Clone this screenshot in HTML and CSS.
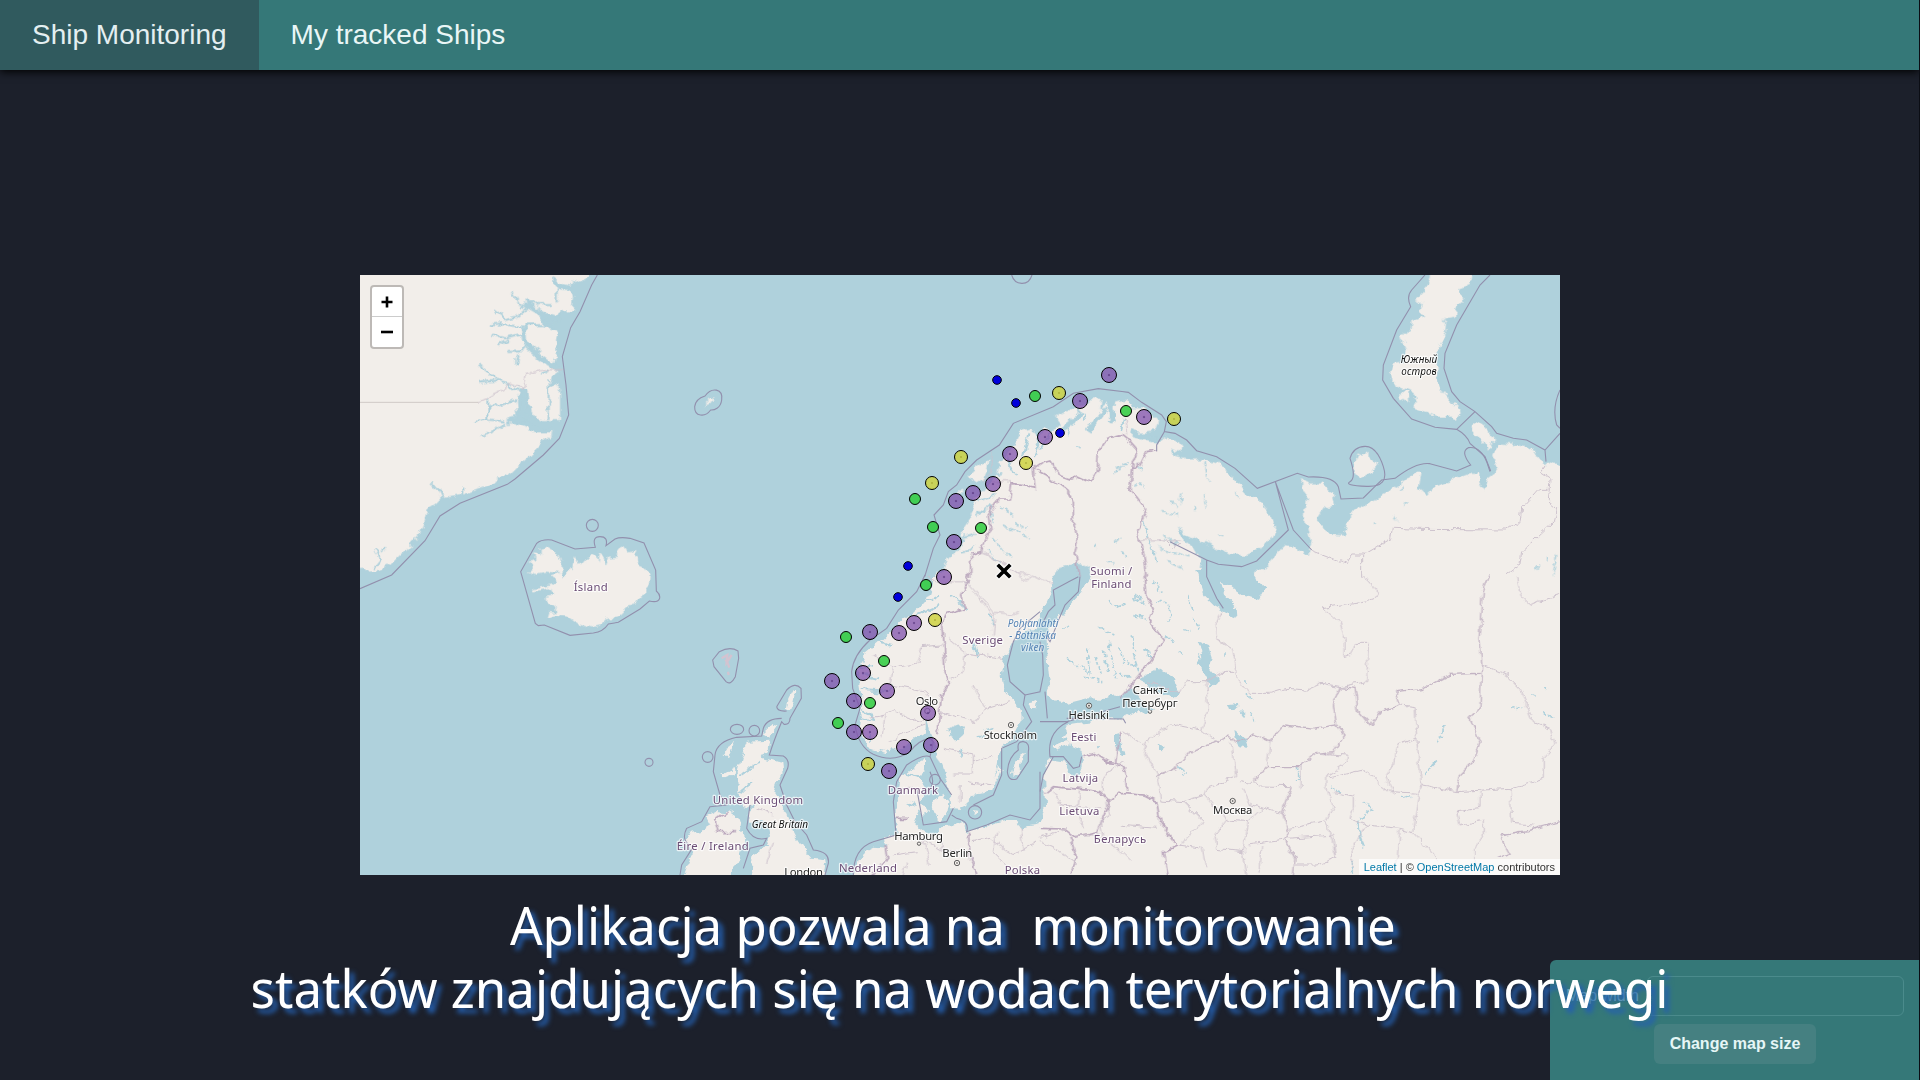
FILE: index.html
```html
<!DOCTYPE html>
<html lang="en">
<head>
<meta charset="utf-8">
<title>Ship Monitoring</title>
<link rel="stylesheet" href="styles.css">
</head>
<body>
<div class="app">
<nav class="navbar">
  <a class="nav-link active">Ship Monitoring</a>
  <a class="nav-link">My tracked Ships</a>
</nav>
<main class="stage">
<div class="map">
<svg class="map-canvas" viewBox="0 0 3600 1800" width="1200" height="600">
<defs>
  <filter id="coast" filterUnits="userSpaceOnUse" x="-60" y="-60" width="3720" height="1920" color-interpolation-filters="sRGB">
    <feTurbulence type="fractalNoise" baseFrequency="0.03" numOctaves="4" seed="7" result="n"/>
    <feDisplacementMap in="SourceGraphic" in2="n" scale="30" xChannelSelector="R" yChannelSelector="G"/>
  </filter>
  <filter id="rough" filterUnits="userSpaceOnUse" x="-60" y="-60" width="3720" height="1920" color-interpolation-filters="sRGB">
    <feTurbulence type="fractalNoise" baseFrequency="0.035" numOctaves="3" seed="3" result="n"/>
    <feDisplacementMap in="SourceGraphic" in2="n" scale="22" xChannelSelector="R" yChannelSelector="G"/>
  </filter>
  <g id="cargo"><circle r="22.5"/><circle class="pin" r="2.5"/></g>
  <g id="tanker"><circle r="19.5"/><circle class="pin" r="2"/></g>
  <circle id="fishing" r="16.5"/>
  <circle id="pilot" r="13"/>
</defs>

<g filter="url(#coast)">
<!-- land: Greenland, Iceland, Jan Mayen -->
<g class="land">
  <path d="M-50-50H700L675 8 645 22 630 32 600 24 575 5 580 28 595 42 620 45 642 60 638 105 610 108 580 130 545 115 520 98 512 68 502 72 508 100 545 130 552 150 590 165 585 195 590 225 580 262 540 245 500 210 492 216 530 250 575 285 600 290 575 305 566 345 590 325 600 345 600 438 540 438 512 405 505 350 475 345 468 380 472 425 440 435 480 450 530 472 582 472 550 500 520 530 490 560 460 590 420 610 380 630 340 645 300 660 245 670 225 690 200 705 190 740 180 775 160 800 130 830 110 850 90 870 60 885-50 890z"/>
  <path d="M500 890L520 870 505 860 530 855 520 835 545 840 545 815 560 812 590 830 605 855 605 890 612 905 630 880 640 885 645 840 660 870 685 840 700 840 712 865 718 838 735 850 740 875 750 845 775 842 770 815 785 808 800 830 830 822 820 840 838 855 835 875 860 885 872 895 870 925 850 945 850 960 825 990 800 995 770 1025 740 1030 720 1050 690 1058 650 1045 620 1022 590 1018 560 1025 565 1008 590 1010 585 990 562 985 560 965 580 960 570 940 518 950 520 940 580 930 590 915 570 905 600 895 560 890 520 897z"/>
  <path d="M1028 398L1050 374 1064 370 1060 382 1045 386z"/>
</g>
<!-- land: northern Scandinavia -->
<g class="land" transform="translate(1200)">
  <path d="M548 912L555 870 575 845 600 820 615 790 605 770 625 740 640 710 650 685 645 670 670 645 690 622 715 590 720 570 710 560 740 545 755 520 770 500 780 470 810 460 830 480 850 465 880 462 900 445 885 425 920 405 950 405 965 395 985 385 1000 370 1025 372 1020 400 1040 385 1045 430 1060 410 1062 380 1080 375 1100 375 1110 400 1150 400 1180 425 1195 440 1185 465 1150 470 1115 470 1120 480 1160 490 1230 520V912H988L990 880 950 865 895 880 875 912z"/>
  <path d="M628 605L650 580 665 570 685 553 682 585 670 612 645 632zM592 658L615 645 608 658z"/>
</g>
<!-- land: Kola, Russian Arctic, Novaya Zemlya -->
<g class="land" transform="translate(2400)">
  <path d="M-20 512L20 488 50 495 65 515 60 530 30 522 40 540 80 550 130 550 170 565 210 600 240 630 270 665 310 690 335 720 345 760 330 790 300 825 260 843 220 838 170 820 130 800 90 780 50 757 70 790 100 815 125 860 120 912H-20z"/>
  <path d="M285 912L320 870 350 835 370 810 400 815 440 840 455 800 445 750 430 740 440 650 415 615 450 628 490 628 520 660 528 690 490 700 470 730 500 775 550 778 570 745 570 710 600 695 640 675 680 650 720 625 770 590 785 590 775 640 800 660 830 630 880 615 930 595 955 590 955 630 975 642 985 610 1012 590 1000 540 1015 505 1060 508 1100 520 1140 545 1150 568 1160 560 1290 610V912z"/>
  <path d="M582 600L580 570 592 542 620 533 652 565 630 595 600 612zM932 455L950 440 975 460 1002 495 992 518 965 500zM718 350L745 353 748 385 720 365z"/>
  <path d="M820-40L815 10 800 35 768 70 795 85 780 110 800 120 755 140 750 165 726 180 730 200 740 220 735 260 700 263 690 290 695 325 715 335 750 350 770 365 760 400 790 412 830 425 870 425 890 435 902 408 870 375 840 335 830 300 830 230 840 200 860 180 865 140 850 130 885 125 890 95 908 75 900 40 930 30 940-40z"/>
</g>
<!-- land: British Isles, southern Scandinavia, continent -->
<g class="land" transform="translate(840 900)">
  <path d="M888-10L870 50 845 90 820 110 790 130 760 160 730 190 700 215 670 240 660 270 655 330 660 360 665 420 660 460 670 490 690 520 740 535 780 520 815 495 850 475 865 450 872 480 885 500 890 540 905 575 920 620 930 660 935 700 960 702 985 690 990 660 1035 655 1055 640 1068 600 1075 560 1080 510 1110 500 1130 460 1145 430 1140 400 1110 370 1095 350 1085 310 1095 240 1120 200 1150 170 1190 160 1200 130 1225 80 1240 45 1235-10H1350L1330 45 1300 75 1260 125 1230 155 1220 200 1225 280 1230 330 1218 355 1240 375 1280 385 1340 370 1400 372 1440 355 1480 340 1525 395 1540 410 1500 405 1450 430 1400 434 1340 440 1290 448 1275 480 1295 512 1325 525 1325 575 1310 612 1295 600 1265 555 1230 550 1215 590 1218 700 1205 725 1190 750 1145 757 1130 735 1100 735 1040 752 985 770 960 742 920 757 880 775 850 770 820 745 830 720 842 690 852 670 855 640 840 610 855 580 852 555 830 568 800 590 775 610 772 640 770 690 770 735 775 770 755 790 735 790 738 818 700 815 670 830 655 860 640 950H2850V-10z"/>
  <path d="M320 500L390 497 388 515 365 545 400 555 430 560 432 580 410 625 400 650 420 680 435 710 450 750 470 790 490 820 510 845 552 850 555 870 545 950H330L340 870 330 845 370 820 390 790 385 760 360 740 330 740 320 720 340 700 310 690 300 660 295 620 290 590 300 550z"/>
  <path d="M200 720L230 705 270 710 305 735 300 770 310 790 300 850 280 890 250 950H120L150 870 140 850 160 830 130 800 150 770 190 765 215 750z"/>
  <path d="M248 545L265 515 285 500 268 545zM240 600L285 575 280 600 255 610zM440 400L445 370 458 345 467 345 460 380 450 405zM368 475L395 450 412 455 390 488z"/>
  <path d="M828 700L850 686 864 708 848 728zM872 695L900 660 928 678 922 712 905 745 880 722zM1116 598L1125 560 1158 535 1145 575 1124 605zM1050 645L1078 575 1082 585 1060 645zM1162 382L1195 375 1190 400 1168 398zM1242 515L1290 495 1288 515 1250 528zM1255 480L1280 475 1272 490zM995 705L1012 708 1008 720z"/>
</g>
<!-- water cut into the land: gulfs, lakes -->
<g class="water" transform="translate(2040 900)">
  <path d="M466-12L490 60 520 90 560 112 592 125 590 100 550 60 540 20 570 28 610 60 660 68 676 40 640-12z"/>
  <path d="M318 300L350 283 400 310 418 350 400 366 350 348 300 322zM472 200L505 215 515 245 505 270 530 300 537 322 515 335 490 290 470 272 490 250zM580 465L612 490 624 522 596 515 585 490zM565 385L590 382 592 398 570 400zM222 480L242 474 240 520 256 540 240 545 222 505zM350 515L375 512 370 526 352 524z"/>
  <path d="M-275 458L-250 448-225 458-230 482-250 500-272 490z"/>
</g>
<g class="fjord">
  <path d="M455 48L475 85 505 98 560 130 580 150M400 105L435 133 470 125 500 98M390 148L430 145 485 152 550 150M400 182L440 190 485 178M412 215L445 195M355 265L390 290 410 318 445 325 475 345M362 326L410 318M385 372L385 432M345 442L380 432 435 440M388 392L430 385 465 375M365 480L395 470 440 445M440 228L490 225 500 210M468 268L475 235M590 40L590 80M505 68L530 90 570 90M566 310V435M212 622L235 650 245 672M45 825L60 855 40 880M310 635V660M85 815L60 830M540 300L560 292"/>
  <path class="wide" d="M495 88L545 118 600 135M490 155L495 205 540 245 600 290M490 350L490 410 520 445 580 452M445 440L490 430"/>
</g>
<g class="fjord" transform="translate(1200)">
  <path class="wide" d="M985 475L1010 435 1035 400M1050 440L1062 405M900 470L940 440 960 410M1110 470L1200 500"/>
  <path d="M830 470L835 510 820 550M805 475L790 540M880 462L840 520M740 550L770 600M700 600L730 590M655 680L700 660M650 720L690 690M610 780L650 770M1055 400L1065 440M970 410L975 440M935 430L920 480M600 830L640 820M1095 430L1090 460"/>
  <path class="lakes" d="M720 690L760 720M735 750L810 785M700 790L750 850M760 745L800 760M680 830L720 860M690 690L700 740M1060 595L1100 570M1070 580L1110 560M1120 625L1160 635M1065 800L1085 790M955 515L965 525M1080 830L1100 850M1130 570L1140 590M1150 740L1190 860M1040 860L1060 870M1000 820L1010 810"/>
</g>
<g class="fjord" transform="translate(2400)">
  <path class="lakes" d="M10 710L60 720M65 650L60 690M105 690L110 710M135 560L145 620M30 680L50 700M0 820L90 850M20 860L70 880M10 780L50 810M130 655L140 700M230 655L240 670M180 780L190 785M645 740L650 745M720 640L730 635M730 690L745 682M700 720L705 740M1160 845V860M1130 875L1140 880M1190 840L1180 900"/>
</g>
<g class="fjord" transform="translate(2040 900)">
  <path class="lakes" d="M145 220L150 290M165 240L180 300M190 220L200 290M210 250L230 310M240 210L250 270M270 190L290 230M260 260L300 280M280 240L300 300M120 270L150 300M130 310L190 320M60 160L90 150M210 75L240 95M230 100L260 90M280 125L320 135M290 60L310 95M340 20L370 50M350 80L380 90M385 95L390 140M430 160L450 165M460 130L480 170M410 230L430 240M380 180L400 200M180 160L220 180M205 200L215 240M240 290L270 310M90 250L110 270M320 220L330 250M440 60L460 110M480 240L490 290M180 510V520M630 415L650 440M618 310V325M600 410L610 425M555 235V245M625 360L630 375M1215 450L1210 490 1190 500M1190 560L1150 600M770 570V615M870 640L900 650M960 730L1000 700 970 690M955 750L970 810M1080 665L1120 670M945 860L930 890M1410 400L1450 395M1480 365L1490 370M415 580L430 600M1510 415L1540 430M1515 350L1520 345"/>
  <path d="M955 740L960 780 975 820"/>
</g>
<g class="fjord" transform="translate(840 900)">
  <path d="M660 270L700 275M665 345L740 350 760 330M670 400L700 415M665 430L700 440 690 410M690 500V475M860 470V440M670 300L720 310M720 200L760 210M830 120L900 90M780 590L850 610M960 545L965 515M1060 460L1030 470M1010 490L1030 485M840 90L900 60M340 620L300 650M300 600L360 560M930 60L980 100M1040 120L1070 150M1000 200L1010 240M900 640L930 660M800 680L830 690M855 560V600"/>
</g>
</g>

<!-- national and regional borders -->
<g filter="url(#rough)">
<g class="country" transform="translate(1200)">
  <path d="M1190 525L1160 530 1140 570 1115 580 1110 640 1160 705 1130 770 1150 830 1162 905M1115 580L1135 530 1100 490 1085 478 1040 490 1015 530 1012 590 990 618 950 600 930 615 900 605 870 555 850 560 820 580 825 640 755 625 748 675 715 675 685 720 690 765 662 830 632 838 632 912M820 580L860 600 920 645 940 680 940 740 952 790 945 830 960 905"/>
</g>
<g class="country" transform="translate(840 900)">
  <path d="M992-5L965 60 975 100 925 115 905 150 915 290 930 320 905 360 895 440 890 475M1515-5L1520 60 1540 100 1525 130 1570 190 1550 230 1500 300 1440 370M1290 640L1240 635 1215 655M1290 640L1380 650 1410 680 1440 655 1510 660 1550 680 1560 740 1610 810 1570 830 1580 900M1440 470L1430 560 1455 590 1460 650M1330 545L1360 535 1400 560 1430 562M1410 680L1370 770 1300 785 1270 762 1200 760M1290 785L1310 850 1290 900M985 770L990 840 1010 900M770 730L800 730M735 810L740 850 700 900M265 705L225 735 235 770 285 770"/>
</g>
<g class="country light" transform="translate(2040 900)">
  <path d="M1350-5L1330 50 1320 190 1325 265 1320 400 1290 430 1320 500 1300 560 1260 600 1250 650M345 605L410 580 450 530 520 505 570 480 590 500 640 480 690 500 735 450 820 460 890 450 880 390 900 335 945 340 955 410 990 450 1020 410 1080 390 1070 350 1150 340 1230 298 1320 295M890 450L915 480 880 530 830 535 780 575 680 575 640 620M755 630L725 710 750 770 735 795 765 850 760 900M1560 740L1470 765 1380 780 1410 835 1370 850"/>
</g>
<g class="region" transform="translate(2040 900)">
  <path d="M970 0L1015 50 1010 70 960 80 850 98 900 145 915 190 915 245 940 235 950 205 985 205 980 320 900 335 845 325 800 345 740 340 690 355 630 355 590 310 585 270 575 220 530 190 525 145 545 110M585 295L540 295 500 320 440 320 420 350 320 320M500 320L505 400 485 465 410 450 380 455 320 500 310 520 350 600 365 675 430 680 495 660 505 635 590 605 575 500M250 470L310 510M430 680L490 740 420 810M485 465L530 500M600 620L660 630 755 632M610 640L635 690 725 715M690 500L680 575M780 575L780 640M830 535L920 540 915 570 860 605 860 640 880 700 860 740 750 760M860 610L970 585 1050 650 1140 655 1150 630 1250 650 1410 640 1415 745 1480 750M1140 655L1120 770 1190 850M1120 770L1080 760 980 750 930 730 940 700 940 660 880 650M1130 490L1070 510 1060 570 1040 600 1060 660M1080 390L1125 395 1130 490 1145 640M1325 270L1400 300 1440 340 1480 440 1530 460 1545 510 1510 550 1510 610 1410 640M1320 650L1320 700 1250 710 1260 750 1330 735 1330 780 1305 820V870M740 790L880 780 890 850 830 870 765 870M860 740L890 850M980 750L935 820 940 880M1080 760L1075 850 1050 900M560 735L525 780 530 820 610 830 625 740 560 735 495 660M625 740L665 700M610 830L620 900M625 810L735 795M415 810L490 820 500 880M665 810L660 890M200 680L210 720 180 740 190 790 240 830 270 860M190 650L190 600 250 560M40 650L65 690 180 700M120 640L110 700 130 760M0 790L80 760M0 800L60 830 110 870M100 780H180M180 740L170 780M1430 0L1440 60 1470 88 1560 60M240 750L350 760"/>
</g>
<g class="region" transform="translate(840 900)">
  <path d="M700 240L760 280 830 265 845 215 905 210M760 280L750 330 850 350 880 380M735 420L760 400 790 420 840 440 860 420M690 430L735 420 725 490M750 500L800 470 860 450M925 190L980 235 1090 250M980 235L970 290 935 310M1000 330L1040 400 1110 380M1040 400L1000 440 900 410M1000 560L1060 540M910 520L1000 540 1000 600 940 600M980 620L1060 630M960 630V680M775 640H850M860 5L900 30M1000 50L1060 120M1070 770L1060 830 1110 880M1000 800L1050 790 1120 840 1190 800M900 780L910 830 990 830M790 780L850 790 870 870M760 840L830 830M400 720L350 700M800 860L790 900M1140 760L1150 830M400 800L380 870M850 790L910 830"/>
</g>
<g class="region" transform="translate(1200)">
  <path d="M662 825L770 895 810 900M1145 795H1260M700 620H755M1095 430L1100 480M692 530L700 570 675 620"/>
</g>
<g class="region" transform="translate(1560 255)">
  <path d="M300 565L440 660 455 648 520 670M265 668L345 760 340 830M200 668H265M345 760L400 765 420 755"/>
</g>
<g class="region" transform="translate(2400)">
  <path d="M610 840L695 790 700 760 780 763 1040 765 1080 740 1085 700 1140 640 1165 640M1155 570L1140 590 1170 610 1165 680 1190 700 1180 740 1085 830 1080 870 1040 900M455 825L560 865 575 840 605 840V905M0 795L20 800 40 820 60 805"/>
</g>
<path class="region" d="M355 382L435 345 445 322 490 340 500 295 560 284 610 284"/>
</g>
<path class="region greenland" d="M0 382H355"/>

<!-- territorial waters -->
<g class="maritime">
  <path d="M712 0L695 30 660 110 632 158 607 245 618 330 626 420 598 490 550 540 465 612 442 628 300 685 240 723 195 797 95 900 0 941"/>
  <path d="M1035 363C1055 335 1090 340 1085 375C1082 400 1062 406 1052 405C1035 428 1003 425 1004 395C1006 375 1022 367 1035 363z"/>
  <circle cx="697" cy="751" r="18"/>
  <path d="M482 890L530 805Q545 792 575 795L645 822 706 817Q695 785 720 785T738 812L765 792Q780 785 810 790L852 804 887 885 889 948Q903 960 898 972T868 978L840 1002 775 1042 745 1047Q730 1070 700 1074L630 1081 553 1050 535 1052 526 1045z"/>
  <path d="M1058 1155L1078 1130Q1110 1113 1134 1128L1136 1150 1126 1205Q1112 1232 1098 1220L1062 1175z"/>
  <path d="M1955 0Q1962 24 1985 25T2016 0"/>
  <path d="M1694 905L1720 820 1740 780 1722 720 1750 690 1765 650 1790 630 1815 590 1850 555 1918 510 1960 445 2080 395 2140 355 2215 341 2305 352 2345 382 2405 420 2419 440 2413 470 2445 475 2480 495 2510 527 2570 545 2625 580 2692 640 2812 595 2845 606Q2920 602 2935 635L2943 672 3010 669 3065 615 3105 610Q3170 560 3210 566L3290 588 3332 570Q3300 530 3325 518Q3360 512 3380 560L3390 590M2413 470L2390 510 2390 528"/>
  <path d="M3195 0L3155 45Q3138 65 3152 95L3110 165 3070 270 3068 315 3100 370 3155 432 3225 457 3290 463Q3320 480 3330 505L3375 545 3392 588M3390 0L3360 30 3290 150 3255 235 3252 280 3275 350 3300 380 3345 410 3395 455 3410 475 3460 490 3500 495 3555 525 3600 475M3290 463L3345 410M3600 345Q3575 400 3590 450L3600 460M3555 525L3558 560"/>
  <path d="M2970 550Q2980 515 3015 514T3070 575 3020 634 2970 620 2970 550z"/>
  <path d="M2746 620L2785 765 2690 858 2645 875 2575 868 2540 855 2430 800M2746 620L2800 765 2855 825M2540 855V905L2570 970 2590 1000"/>
  <g transform="translate(840 900)">
    <path d="M855 0L830 50 775 105 740 160 690 195Q640 240 635 290L638 340 660 400 645 450Q655 515 700 538Q760 565 810 530Q835 495 870 490L880 500 870 545 900 610 935 660"/>
    <path d="M410 395L440 345Q465 320 483 340L484 370 450 430Q450 450 432 448L425 440Q400 500 388 540L430 543Q450 555 443 580L420 630 440 690 465 740 500 780 520 825Q570 830 565 865L555 900"/>
    <path d="M410 395Q412 410 440 408M425 430Q380 430 370 460L365 483 290 487Q230 500 225 540L220 590 240 660 260 690 210 695 185 740 140 760Q120 800 160 815L125 870 120 900M330 690L320 760Q340 800 380 790L370 810 330 820 310 880"/>
    <circle cx="27" cy="562" r="12"/><circle cx="203" cy="546" r="16"/><ellipse cx="291" cy="463" rx="20" ry="15"/><circle cx="343" cy="467" r="16"/>
    <path d="M870 545Q850 535 800 570L770 620 760 680 768 780 700 800Q640 820 640 900"/>
    <circle cx="885" cy="614" r="16"/><circle cx="1005" cy="712" r="20"/>
    <path d="M935 720L950 730Q990 740 980 770L1040 750 1110 720 1170 735 1200 700V590M1000 690L1060 660 1085 600 1085 520 1130 500 1175 440 1150 390 1155 360 1110 320 1102 270 1120 200 1140 160 1200 110"/>
    <path d="M1102 590Q1105 545 1135 525Q1130 498 1150 500T1165 530L1165 560 1130 612Q1105 620 1102 590zM1155 360L1200 350 1210 300 1208 240 1200 200M1200 440L1280 440 1370 415 1440 395M1280 430L1450 432 1457 445M1215 350L1222 430M1285 440Q1220 470 1230 545L1270 545 1300 580 1318 575 1325 545M1240 545L1210 600 1200 650"/>
    <path d="M870 590Q890 630 860 650M830 640L850 750 920 740 940 700"/>
  </g>
  <path d="M2160 905L2155 950 2115 990 2100 1025 2080 1075 2070 1100 2055 1080M2155 905L2080 945 2085 990 2065 1010 2050 1040"/>
</g>
<g class="faroe" transform="translate(840 900)"><path d="M245 250L262 240 260 262 275 240M262 262L268 278M264 290L266 300M255 258L270 250"/></g>

<!-- capital markers -->
<g class="capital">
  <circle cx="1953" cy="1350" r="8"/><circle cx="1791" cy="1764" r="8"/><circle cx="2187" cy="1292" r="8"/><circle cx="2618" cy="1578" r="8"/><circle cx="1677" cy="1706" r="5"/><circle cx="2370" cy="1310" r="5"/><circle cx="1702" cy="1308" r="8"/>
</g>
<g class="dots"><circle cx="1953" cy="1350" r="2.5"/><circle cx="1791" cy="1764" r="2.5"/><circle cx="2187" cy="1292" r="2.5"/><circle cx="2618" cy="1578" r="2.5"/></g>

<!-- place names -->
<g class="label nation">
  <text x="692" y="947" textLength="102">Ísland</text>
  <text x="1868" y="1108" textLength="122">Sverige</text>
  <text x="2254" y="900" textLength="126">Suomi /</text>
  <text x="2254" y="940" textLength="121">Finland</text>
  <text x="1194" y="1587" textLength="271">United Kingdom</text>
  <text x="1058" y="1724" textLength="216">Éire / Ireland</text>
  <text x="1659" y="1558" textLength="151">Danmark</text>
  <text x="1524" y="1791" textLength="174">Nederland</text>
  <text x="1987" y="1798" textLength="106">Polska</text>
  <text x="2171" y="1398" textLength="76">Eesti</text>
  <text x="2161" y="1521" textLength="107">Latvija</text>
  <text x="2158" y="1621" textLength="120">Lietuva</text>
  <text x="2280" y="1705" textLength="157">Беларусь</text>
</g>
<g class="label city">
  <text x="1701" y="1290" textLength="67">Oslo</text>
  <text x="1951" y="1392" textLength="160">Stockholm</text>
  <text x="1676" y="1694" textLength="146">Hamburg</text>
  <text x="1792" y="1747" textLength="90">Berlin</text>
  <text x="1331" y="1802" textLength="116">London</text>
  <text x="2186" y="1333" textLength="121">Helsinki</text>
  <text x="2370" y="1257" textLength="103">Санкт-</text>
  <text x="2370" y="1295" textLength="167">Петербург</text>
  <text x="2618" y="1618" textLength="118">Москва</text>
</g>
<g class="label isle">
  <text x="1260" y="1659" textLength="169">Great Britain</text>
  <text x="3177" y="264" textLength="109">Южный</text>
  <text x="3177" y="300" textLength="106">остров</text>
</g>
<g class="label gulf">
  <text x="2019" y="1056" textLength="152">Pohjanlahti</text>
  <text x="2018" y="1092" textLength="140">- Bottniska</text>
  <text x="2018" y="1127" textLength="70">viken</text>
</g>

<!-- ships -->
<g class="ships cargo">
  <use href="#cargo" x="2247" y="300"/><use href="#cargo" x="2160" y="378"/><use href="#cargo" x="2352" y="426"/><use href="#cargo" x="2055" y="486"/><use href="#cargo" x="1950" y="537"/><use href="#cargo" x="1899" y="627"/><use href="#cargo" x="1839" y="654"/><use href="#cargo" x="1788" y="678"/><use href="#cargo" x="1782" y="801"/><use href="#cargo" x="1752" y="906"/><use href="#cargo" x="1662" y="1044"/><use href="#cargo" x="1617" y="1074"/><use href="#cargo" x="1530" y="1071"/><use href="#cargo" x="1509" y="1194"/><use href="#cargo" x="1416" y="1218"/><use href="#cargo" x="1581" y="1248"/><use href="#cargo" x="1482" y="1278"/><use href="#cargo" x="1704" y="1314"/><use href="#cargo" x="1482" y="1371"/><use href="#cargo" x="1530" y="1371"/><use href="#cargo" x="1632" y="1416"/><use href="#cargo" x="1713" y="1410"/><use href="#cargo" x="1587" y="1488"/>
</g>
<g class="ships tanker">
  <use href="#tanker" x="2097" y="354"/><use href="#tanker" x="1803" y="546"/><use href="#tanker" x="1998" y="564"/><use href="#tanker" x="1716" y="624"/><use href="#tanker" x="2442" y="432"/><use href="#tanker" x="1725" y="1035"/><use href="#tanker" x="1524" y="1467"/>
</g>
<g class="ships fishing">
  <use href="#fishing" x="2025" y="363"/><use href="#fishing" x="2298" y="408"/><use href="#fishing" x="1665" y="672"/><use href="#fishing" x="1719" y="756"/><use href="#fishing" x="1863" y="759"/><use href="#fishing" x="1698" y="930"/><use href="#fishing" x="1458" y="1086"/><use href="#fishing" x="1572" y="1158"/><use href="#fishing" x="1530" y="1284"/><use href="#fishing" x="1434" y="1344"/>
</g>
<g class="ships pilot">
  <use href="#pilot" x="1911" y="315"/><use href="#pilot" x="1968" y="384"/><use href="#pilot" x="2100" y="474"/><use href="#pilot" x="1644" y="873"/><use href="#pilot" x="1614" y="966"/>
</g>
<g class="cross"><path class="halo" d="M1917 873L1947 903M1947 873L1917 903"/><path d="M1917 873L1947 903M1947 873L1917 903"/></g>
</svg>
<div class="zoom">
  <button class="zoom-btn"><svg width="12" height="12" viewBox="0 0 12 12"><path d="M6 .5v11M.5 6h11"/></svg></button>
  <button class="zoom-btn"><svg width="12" height="12" viewBox="0 0 12 12"><path d="M0 6h12"/></svg></button>
</div>
<div class="attribution"><a>Leaflet</a> | © <a>OpenStreetMap</a> contributors</div>
</div>
</main>
<form class="size-panel">
  <div class="field"><label for="w">Map width</label><input id="w" type="text"></div>
  <button class="submit" type="button">Change map size</button>
</form>
<div class="subtitle"><p class="line">Aplikacja pozwala na  monitorowanie </p><p class="line">statków znajdujących się na wodach terytorialnych norwegi</p></div>
</div>
</body>
</html>
```
FILE: styles.css
```css
* { box-sizing: border-box; }
body { margin: 0; background: #0b0d14; font-family: "Liberation Sans", Arial, sans-serif; }
.app { position: relative; width: 1919px; height: 1080px; background: #1c202b; display: flex; flex-direction: column; overflow: hidden; }
.navbar { display: flex; height: 70px; flex: none; background: #357878; box-shadow: 0 2px 8px rgba(0,0,0,.95); }
.nav-link { display: flex; align-items: center; padding: 0 32px; font-size: 28px; color: #e9f6f6; }
.nav-link.active { background: #305a5e; color: #e4eff1; }
.stage { flex: 1; display: flex; align-items: center; justify-content: center; padding-left: 1px; }
.map { position: relative; width: 1200px; height: 600px; background: #afd1dc; overflow: hidden; }
.map-canvas { display: block; }

.land { fill: #f2eeea; }
.water { fill: #afd1dc; }
.fjord { fill: none; stroke: #afd1dc; stroke-width: 6; }
.fjord .wide { stroke-width: 15; }
.fjord .lakes { stroke-width: 5; stroke-dasharray: 14 5; }
.country { fill: none; stroke: #bca9be; stroke-width: 5; }
.country.light { stroke: #c3b4c4; stroke-width: 4; }
.region { fill: none; stroke: #cdc2cd; stroke-width: 3; }
.region.greenland { stroke: #cfc9c6; }
.maritime { fill: none; stroke: #9290ad; stroke-width: 3.3; }
.faroe { fill: none; stroke: #d3c3d0; stroke-width: 7; }
.capital { fill: #f2eeea; stroke: #444; stroke-width: 2.5; }
.dots { fill: #444; }

.label { font-family: "Noto Sans", sans-serif; text-anchor: middle; paint-order: stroke; stroke: rgba(255,255,255,.75); stroke-width: 7; stroke-linejoin: round; }
.nation { font-size: 34px; fill: #6b4d75; }
.city { font-size: 34px; fill: #262626; }
.isle { font-size: 30px; font-style: italic; fill: #111; }
.gulf { font-size: 30px; font-style: italic; fill: #5583b5; stroke: rgba(255,255,255,.4); }

.ships { stroke: #000; stroke-width: 3; }
.pin { fill: #5c3b83; stroke: #5c3b83; stroke-width: 1; }
.cargo { fill: rgba(128,80,172,.75); }
.tanker { fill: rgba(205,210,60,.82); }
#tanker .pin { fill: #a5a637; stroke: #a5a637; }
.fishing { fill: rgba(50,205,65,.88); }
.pilot { fill: #0000dc; }
.cross { fill: none; stroke: #000; stroke-width: 11; stroke-linecap: square; }
.cross .halo { stroke: #fff; stroke-width: 17; }

.zoom { position: absolute; left: 10px; top: 10px; display: flex; flex-direction: column; border: 2px solid rgba(0,0,0,.22); border-radius: 4px; background: #fff; background-clip: padding-box; }
.zoom-btn { display: flex; align-items: center; justify-content: center; width: 30px; height: 30px; padding: 0 0 1px 0; border: 0; background: none; }
.zoom-btn:first-child { border-bottom: 1px solid #ccc; padding: 0; }
.zoom-btn path { stroke: #000; stroke-width: 2.6; }
.attribution { position: absolute; right: 0; bottom: 0; height: 16px; padding: 0 5px; line-height: 16px; font-size: 11px; color: #333; background: rgba(255,255,255,.7); white-space: nowrap; }
.attribution a { color: #0078a8; }

.size-panel { position: absolute; right: 0; bottom: 0; width: 369px; height: 120px; padding: 16px 15px 16px 16px; display: flex; flex-direction: column; align-items: center; gap: 8px; background: #357878; border-top-left-radius: 6px; }
.field { display: flex; width: 100%; align-items: center; justify-content: space-between; font-size: 16px; color: #79b3bd; }
.field input { width: 257px; height: 40px; background: transparent; border: 1px solid #4b8b8c; border-radius: 6px; }
.submit { width: 162px; height: 40px; padding: 0; border: 0; border-radius: 6px; background: #458081; color: #e5f6f6; font: bold 16px "Liberation Sans", Arial, sans-serif; }

.subtitle { position: absolute; left: 0; right: 0; top: 893px; display: flex; flex-direction: column; align-items: center; font-family: "Noto Sans", sans-serif; font-size: 53px; color: #fff; text-shadow: 5px 5px 5px #2560b0; transform: scaleX(.962); }
.line { margin: 0; line-height: 63px; white-space: pre; }
```
